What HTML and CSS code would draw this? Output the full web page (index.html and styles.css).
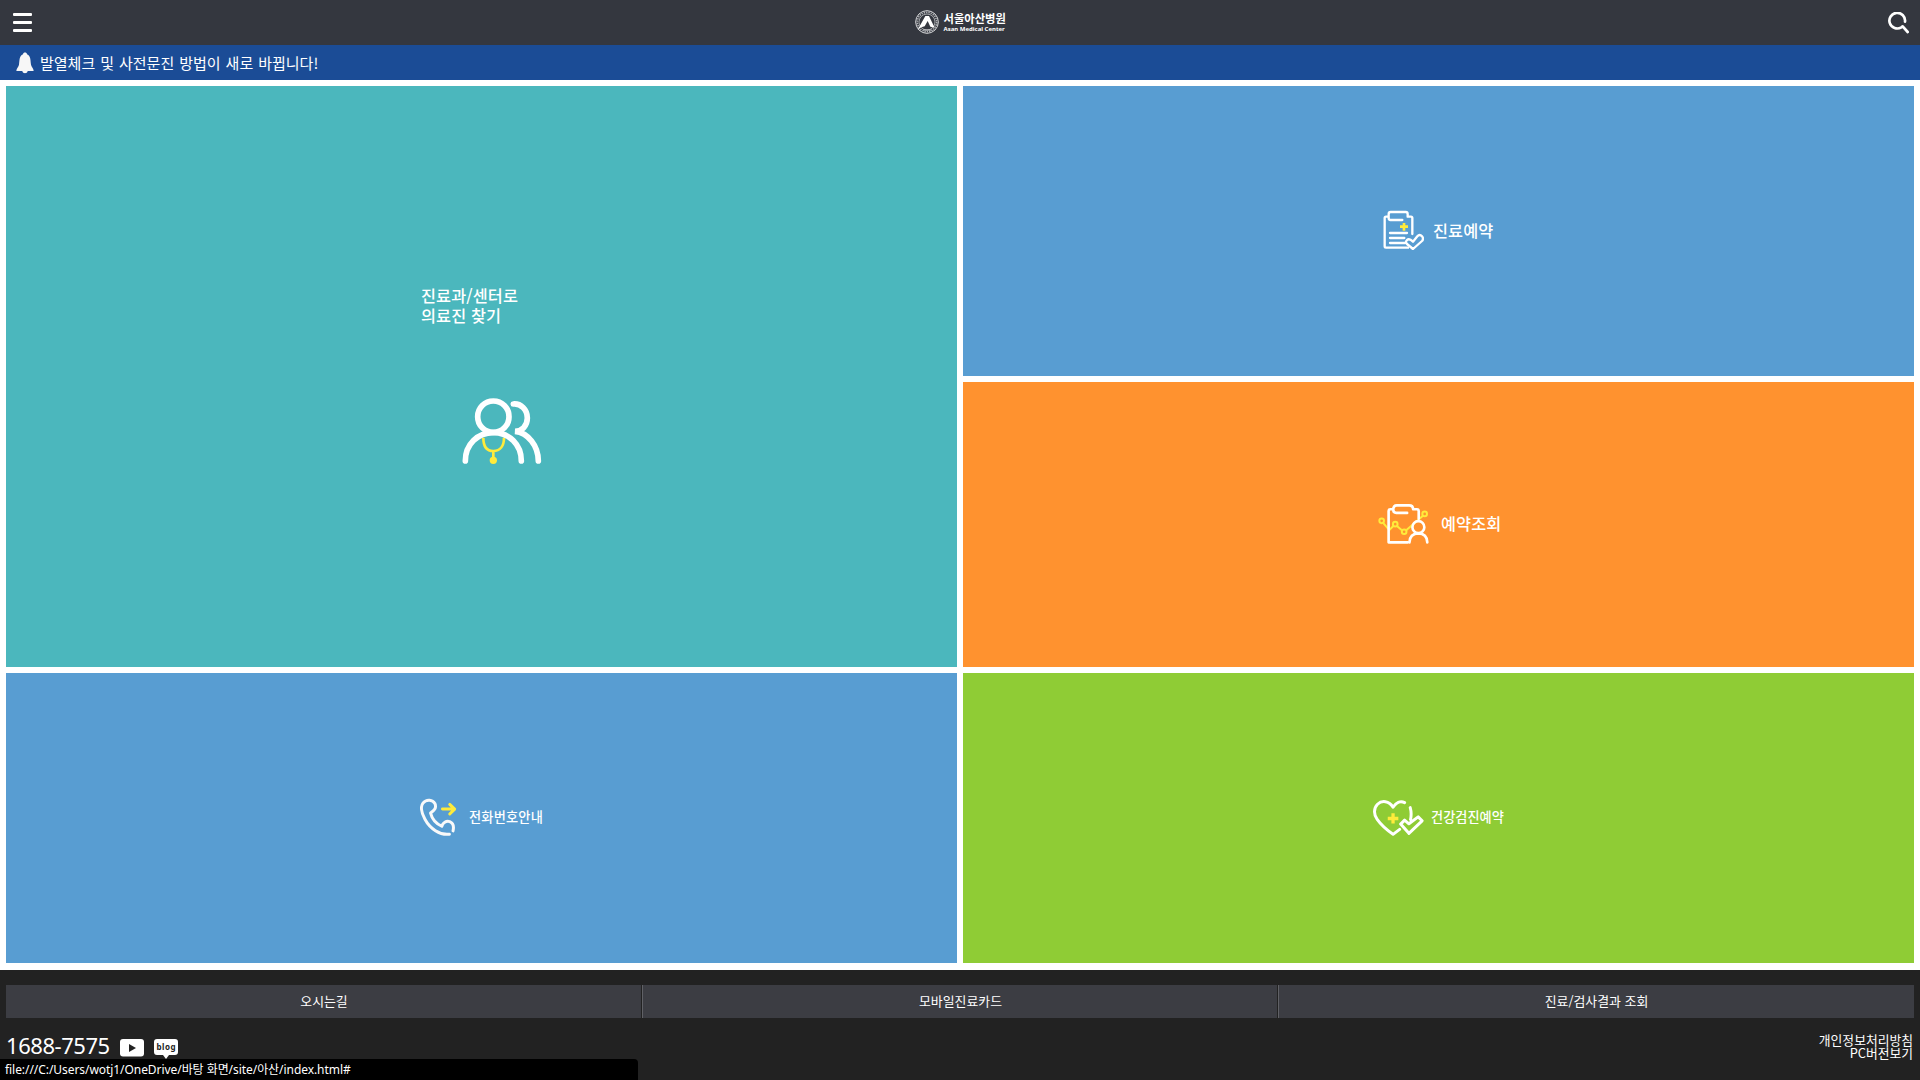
FILE: index.html
```html
<!DOCTYPE html>
<html lang="ko">
<head>
<meta charset="utf-8">
<title>서울아산병원</title>
<link rel="stylesheet" href="styles.css">
</head>
<body>
<header class="header">
  <a class="menu" href="#" aria-label="메뉴"><i></i><i></i><i></i></a>
  <a class="logo" href="#">
    <svg class="emblem" viewBox="0 0 72 72">
      <circle cx="36" cy="36" r="34" fill="none" stroke="#d8d9db" stroke-width="3"/>
      <circle cx="36" cy="36" r="29" fill="none" stroke="#aeb0b4" stroke-width="5" stroke-dasharray="4 3"/>
      <circle cx="36" cy="36" r="24" fill="none" stroke="#d8d9db" stroke-width="2"/>
      <path d="M8 59 31 18h11l17 35-13-3-8-17-9 16q-10 1-21 10z" fill="#fff"/>
      <path d="M25 60h24" stroke="#c8c9cc" stroke-width="5" stroke-dasharray="4 2"/>
    </svg>
    <span class="logo-text"><b>서울아산병원</b><small>Asan Medical Center</small></span>
  </a>
  <a class="search" href="#" aria-label="검색">
    <svg viewBox="0 0 66 66"><path d="M54 29A23.500 23.500 0 1 0 43 46L47 43 62 60" fill="none" stroke="#fff" stroke-width="8" stroke-linecap="round" stroke-linejoin="round"/></svg>
  </a>
</header>
<div class="notice">
  <svg class="bell" viewBox="0 0 54 66"><path d="M21 7C21 0 33 0 33 7C45 13 43 25 45 38C46 45 53 49 53 57H35C34 66 20 66 19 57H1C1 49 8 45 9 38C11 25 9 13 21 7Z" fill="#f7f7f7"/></svg>
  <span>발열체크 및 사전문진 방법이 새로 바뀝니다!</span>
</div>
<main class="tiles">
  <a class="tile doctors" href="#">
    <span class="label">진료과/센터로<br>의료진 찾기</span>
    <svg class="icon" viewBox="186 382 240 198">
      <g fill="none" stroke="#ffeb3b" stroke-width="8"><path d="M250 501C250 526 260 541 280 541S312 526 312 501M280 541v20"/><circle cx="280" cy="569" r="7" fill="#ffeb3b"/></g>
      <g fill="none" stroke="#fff" stroke-width="17" stroke-linecap="round"><circle cx="280" cy="438" r="47"/><path d="M196 571C196 521 233 486 280 486S364 521 364 571M340 400C362 398 382 416 382 442C382 466 365 482 345 482C384 486 415 525 415 571"/></g>
    </svg>
  </a>
  <a class="tile booking" href="#">
    <svg class="icon" viewBox="70 60 123 120">
      <g fill="none" stroke="#fff" stroke-width="7" stroke-linecap="round" stroke-linejoin="round"><path d="M128 90H92Q87 90 87 84V72Q87 66 93 66H138Q144 66 144 72V80H154Q158 80 158 84V132M87 80H79Q75 80 75 84V169Q75 173 79 173H145M91 129H142M91 144H134M91 159H137"/><path d="M160 177 142 162Q136 156 142 150Q149 144 160 155L173 139Q180 131 187 139Q193 146 187 153Z"/></g>
      <path d="M133 99V122M121 110H145" stroke="#ffeb3b" stroke-width="8"/>
    </svg>
    <span class="label">진료예약</span>
  </a>
  <a class="tile lookup" href="#">
    <svg class="icon" viewBox="52 38 154 124">
      <g fill="none" stroke="#ffeb3b" stroke-width="6"><path d="M68 99 86 120 99 107M110 108 125 121M138 120 187 77"/><circle cx="63" cy="92" r="7"/><circle cx="104" cy="102" r="7"/><circle cx="131" cy="125" r="7"/><circle cx="193" cy="71" r="7"/></g>
      <g fill="none" stroke="#fff" stroke-width="8" stroke-linecap="round" stroke-linejoin="round"><path d="M140 68H107Q98 68 98 58Q98 45 109 45H146Q158 45 158 57H170Q175 57 175 62V86M98 57H89Q84 57 84 62V157H142"/><circle cx="174" cy="111" r="18"/><path d="M147 157Q148 131 174 130Q200 131 201 157"/></g>
    </svg>
    <span class="label">예약조회</span>
  </a>
  <a class="tile phone" href="#">
    <svg class="icon" viewBox="58 38 112 117">
      <path d="M147 147C118 151 88 130 73 102C62 81 60 62 67 53C78 39 97 43 103 54C109 68 101 75 90 83C94 99 107 115 124 123C127 112 137 106 148 109C158 113 161 124 158 137" fill="none" stroke="#f9f9f9" stroke-width="9" stroke-linecap="round" stroke-linejoin="round"/>
      <path d="M126 71H160M148 57 163 71 148 86" fill="none" stroke="#ffeb3b" stroke-width="9" stroke-linecap="round" stroke-linejoin="round"/>
    </svg>
    <span class="label">전화번호안내</span>
  </a>
  <a class="tile checkup" href="#">
    <svg class="icon" viewBox="36 41 156 112">
      <g fill="none" stroke="#fff" stroke-width="9" stroke-linecap="round" stroke-linejoin="round"><path d="M134 52C121 45 108 52 99 66C87 46 65 44 52 57C40 69 40 88 51 103C63 120 80 135 99 148L119 133M151 67Q156 84 152 103"/><path d="M122 117 134 105 147 116 175 95 187 107 147 145Z"/></g>
      <path d="M99 84V115M83 100H115" stroke="#ffeb3b" stroke-width="10"/>
    </svg>
    <span class="label">건강검진예약</span>
  </a>
</main>
<footer class="footer">
  <nav class="links"><a href="#">오시는길</a><a href="#">모바일진료카드</a><a href="#">진료/검사결과 조회</a></nav>
  <div class="contact">
    <div class="left">
      <span class="tel">1688-7575</span>
      <svg class="social" viewBox="0 0 24 20"><rect width="24" height="17.500" rx="3" fill="#fff"/><path d="M9 5 16 9 9 13Z" fill="#222"/></svg>
      <svg class="social" viewBox="0 0 24 20"><path d="M3 0H21Q24 0 24 3V13Q24 16 21 16H15L12 20 9 16H3Q0 16 0 13V3Q0 0 3 0Z" fill="#fff"/><text x="12" y="10.500" text-anchor="middle" textLength="19" class="blog-text">blog</text></svg>
    </div>
    <div class="policy"><a href="#">개인정보처리방침</a><a href="#">PC버전보기</a></div>
  </div>
</footer>
<div class="status">file:///C:/Users/wotj1/OneDrive/바탕 화면/site/아산/index.html#</div>
</body>
</html>
```
FILE: styles.css
```css
* { box-sizing: border-box; }
body {
  margin: 0;
  height: 1080px;
  display: flex;
  flex-direction: column;
  overflow: hidden;
  background: #fff;
  color: #fff;
  font-family: "Noto Sans CJK KR", sans-serif;
}
a { color: inherit; text-decoration: none; }
svg { display: block; flex: none; }
.header {
  height: 45px;
  flex: none;
  display: grid;
  grid-template-columns: 1fr auto 1fr;
  padding: 0 11px 0 13px;
  background: #34373f;
}
.menu { display: flex; flex-direction: column; gap: 5px; padding-top: 13px; }
.menu i { width: 19px; height: 3px; border-radius: 1px; background: #fff; }
.logo { display: flex; gap: 5px; padding: 10px 2px 0 0; }
.emblem { width: 24px; height: 24px; }
.logo-text { display: flex; flex-direction: column; width: 62px; white-space: nowrap; }
.logo-text b { font-size: 11.300px; line-height: 17px; height: 15px; font-weight: 700; }
.logo-text small { font: 700 6px/9px "Noto Sans", sans-serif; }
.search { justify-self: end; padding-top: 12px; }
.search svg { width: 22px; height: 22px; }
.notice {
  height: 35px;
  flex: none;
  display: flex;
  gap: 6px;
  padding: 7px 16px;
  background: #1b4c96;
  font-size: 15px;
  line-height: 21px;
  word-spacing: 0.800px;
}
.bell { width: 18px; height: 22px; }
.tiles {
  height: 890px;
  flex: none;
  display: grid;
  grid-template-columns: 951px 951px;
  grid-template-rows: 290px 285px 290px;
  gap: 6px;
  padding: 6px;
}
.tile { display: flex; align-items: center; padding-bottom: 2px; }
.label { font-size: 16.300px; line-height: 20px; font-weight: 500; letter-spacing: 0.100px; white-space: nowrap; }
.doctors {
  grid-row: span 2;
  flex-direction: column;
  align-items: flex-start;
  padding: 199px 0 0 415px;
  gap: 73px;
  background: #4bb7bd;
}
.doctors .icon { width: 80px; height: 66px; margin-left: 41px; }
.booking { padding-left: 420px; gap: 9px; background: #589dd2; }
.booking .icon { width: 41px; height: 40px; }
.lookup { padding-left: 415px; padding-bottom: 3px; gap: 12px; background: #ff922f; }
.lookup .icon { width: 51px; height: 41px; }
.phone { padding-left: 414px; gap: 12px; background: #589dd2; }
.phone .icon { width: 37px; height: 39px; }
.checkup { padding-left: 409px; gap: 7px; background: #8fcc35; }
.checkup .icon { width: 52px; height: 37px; }
.phone .label, .checkup .label { font-size: 13.200px; }
.phone .label { letter-spacing: 0.200px; }
.checkup .label { letter-spacing: 0; }
.footer { flex: 1; padding: 15px 6px 0; background: #222; }
.links { display: grid; grid-template-columns: repeat(3, 1fr); height: 33px; background: #3c3d43; }
.links a {
  font-size: 12.900px;
  line-height: 31px;
  text-align: center;
}
.links a + a { border-left: 1px solid #606166; box-shadow: -1px 0 #222; }
.contact { display: flex; justify-content: space-between; padding-top: 14px; }
.left { display: flex; }
.tel { width: 114px; margin-top: -1px; font: 22px/28px "Noto Sans", sans-serif; letter-spacing: -0.450px; }
.social { width: 24px; height: 20px; margin: 7px 10px 0 0; }
.blog-text { font: 700 8px "Noto Sans", sans-serif; fill: #222; }
.policy { display: flex; flex-direction: column; align-items: flex-end; padding: 1px 1px 0 0; font-size: 12.800px; line-height: 13px; }
.status {
  position: absolute;
  left: 0;
  bottom: 0;
  width: 638px;
  height: 21px;
  padding: 1px 0 0 5px;
  border-top-right-radius: 4px;
  background: #000;
  font: 12px/20px "Noto Sans", "Noto Sans CJK KR", sans-serif;
  letter-spacing: -0.060px;
}
```
